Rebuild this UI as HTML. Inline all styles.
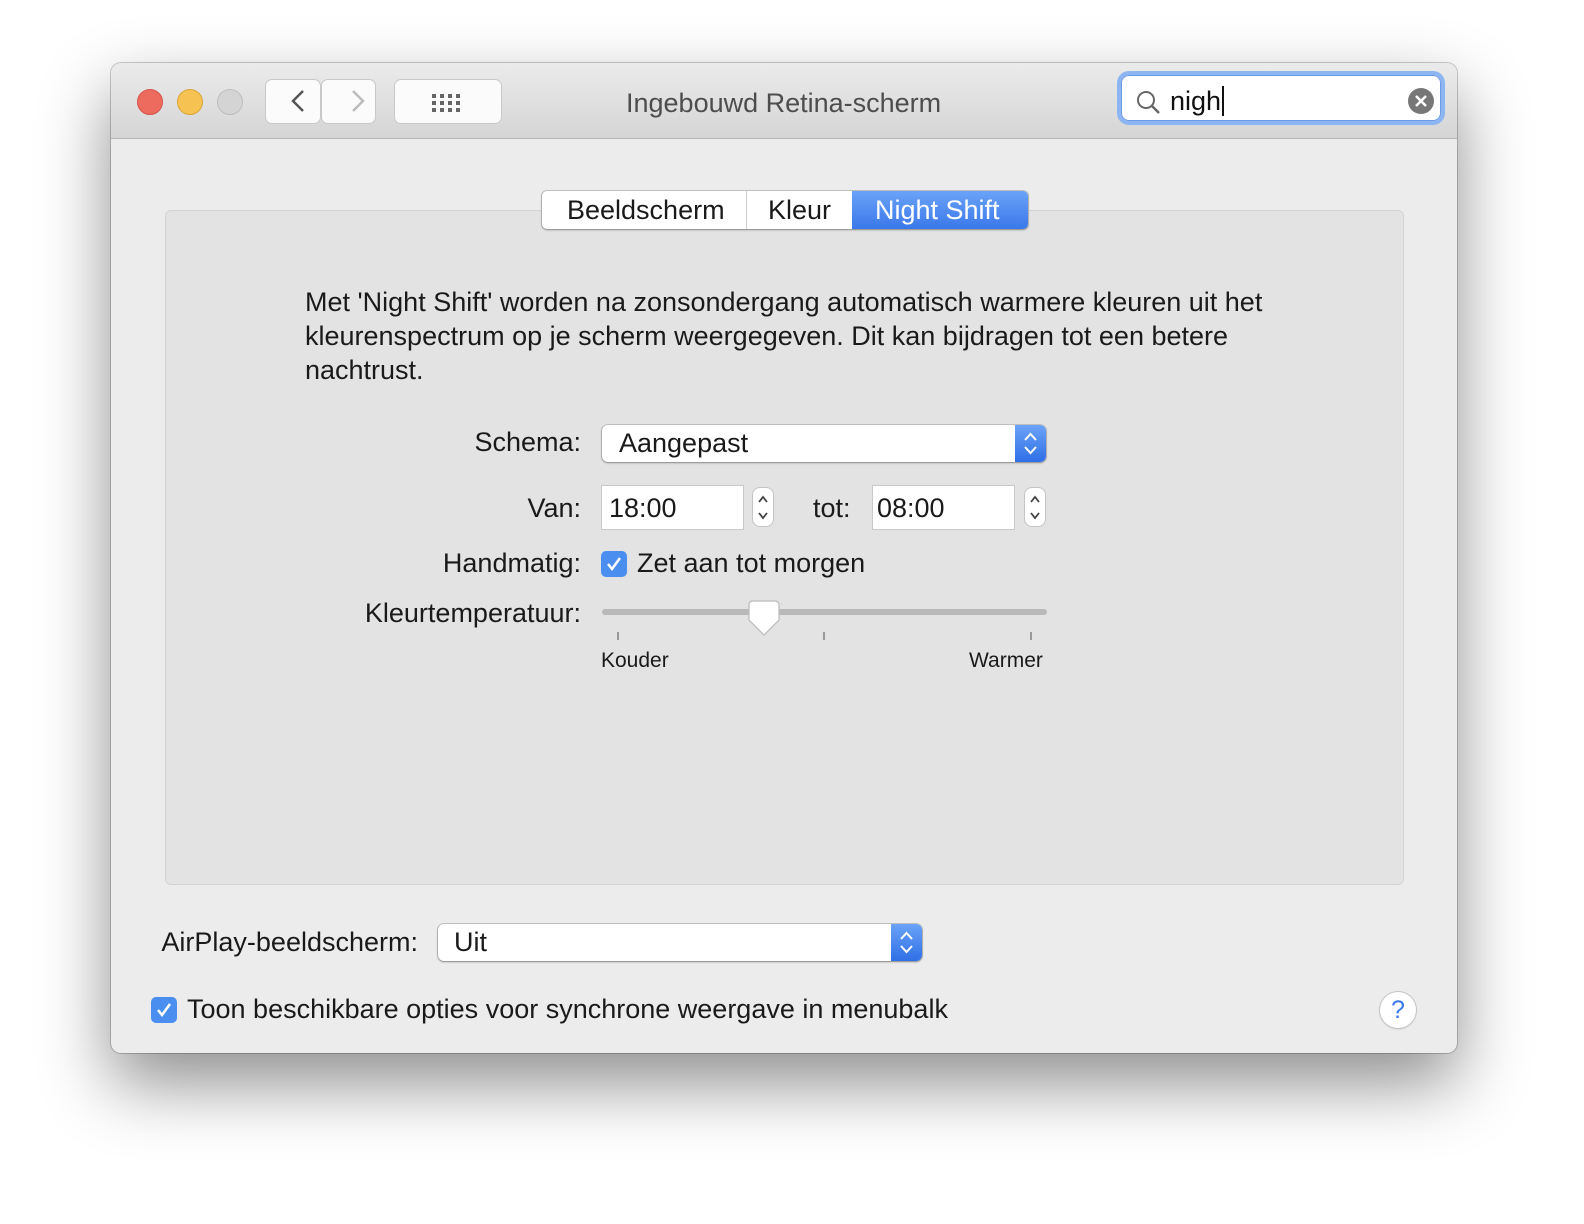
<!DOCTYPE html>
<html><head><style>
body{margin:0;width:1584px;height:1224px;background:#fff;font-family:"Liberation Sans",sans-serif;position:relative;overflow:hidden;color:#1a1a1a}
.a{position:absolute}
.win{left:111px;top:63px;width:1346px;height:990px;background:#ececec;border-radius:10px;box-shadow:0 30px 70px rgba(0,0,0,.45),0 0 0 1px rgba(0,0,0,.2);overflow:hidden}
.tb{left:0;top:0;width:1346px;height:75px;background:linear-gradient(#ebebeb,#d5d5d5);border-bottom:1px solid #b8b8b8}
.dot{width:24px;height:24px;border-radius:50%;top:26px}
.btn{background:#fbfbfb;border:1px solid #c8c8c8;border-radius:7px;height:43px;top:16px}
.t{font-size:27px;white-space:nowrap}
.r{text-align:right}
.field{background:#fff;box-shadow:0 0 0 1px #c9c9c9 inset}
.pop{background:#fff;border-radius:6px;box-shadow:0 1px 2px rgba(0,0,0,.3),0 0 0 1px #c4c4c4}
.arr{background:linear-gradient(#6aa3f8,#2f6fe6);border-radius:0 6px 6px 0}
.chk{width:26px;height:26px;border-radius:5px;background:#4a8ef0}
</style></head><body>
<div class="a win">
 <div class="a tb">
  <div class="a dot" style="left:26px;background:#ed6a5e;border:1px solid #d5544a"></div>
  <div class="a dot" style="left:66px;background:#f6c251;border:1px solid #d9a53a"></div>
  <div class="a dot" style="left:106px;background:#d4d4d4;border:1px solid #bdbdbd"></div>
  <div class="a btn" style="left:154px;width:54px"></div>
  <div class="a btn" style="left:210px;width:53px"></div>
  <svg class="a" style="left:154px;top:16px" width="110" height="45"><path d="M38 12 L28 22 L38 32" stroke="#555" stroke-width="2.5" fill="none"/><path d="M88 12 L98 22 L88 32" stroke="#bbb" stroke-width="2.5" fill="none"/></svg>
  <div class="a btn" style="left:283px;width:106px"></div>
  <svg class="a" style="left:320px;top:30px" width="32" height="20" fill="#666"><g><rect x="1" y="1" width="4" height="4"/><rect x="9" y="1" width="4" height="4"/><rect x="17" y="1" width="4" height="4"/><rect x="25" y="1" width="4" height="4"/><rect x="1" y="8" width="4" height="4"/><rect x="9" y="8" width="4" height="4"/><rect x="17" y="8" width="4" height="4"/><rect x="25" y="8" width="4" height="4"/><rect x="1" y="15" width="4" height="4"/><rect x="9" y="15" width="4" height="4"/><rect x="17" y="15" width="4" height="4"/><rect x="25" y="15" width="4" height="4"/></g></svg>
  <div class="a t" style="left:515px;top:25px;color:#4d4d4d">Ingebouwd Retina-scherm</div>
  <div class="a" style="left:1010px;top:12px;width:320px;height:46px;border-radius:8px;background:#fff;box-shadow:0 0 0 4px #8cb5f2,0 0 0 1px #6a9ae8 inset"></div>
  <svg class="a" style="left:1024px;top:26px" width="28" height="28"><circle cx="11" cy="11" r="8" stroke="#666" stroke-width="2" fill="none"/><path d="M17 17 L24 24" stroke="#666" stroke-width="2.5"/></svg>
  <div class="a t" style="left:1059px;top:23px;color:#111">nigh<span style="border-left:2px solid #111;margin-left:1px"></span></div>
  <svg class="a" style="left:1297px;top:25px" width="26" height="26"><circle cx="13" cy="13" r="13" fill="#777"/><path d="M8 8L18 18M18 8L8 18" stroke="#fff" stroke-width="2.5"/></svg>
 </div>
 <div class="a" style="left:54px;top:147px;width:1237px;height:673px;background:#e3e3e3;border:1px solid #d3d3d3;border-radius:6px"></div>
 <div class="a" style="left:431px;top:128px;width:486px;height:38px;background:#fff;border-radius:5px;box-shadow:0 1px 2px rgba(0,0,0,.3),0 0 0 1px #c4c4c4;overflow:hidden">
  <div class="a t" style="left:25px;top:4px">Beeldscherm</div>
  <div class="a" style="left:204px;top:0;width:1px;height:38px;background:#ccc"></div>
  <div class="a t" style="left:226px;top:4px">Kleur</div>
  <div class="a" style="left:310px;top:0;width:176px;height:38px;background:linear-gradient(#6aa3f8,#3a78ea)"></div>
  <div class="a t" style="left:333px;top:4px;color:#fff">Night Shift</div>
 </div>
 <div class="a t" style="left:194px;top:222px;line-height:34px;white-space:normal;width:990px">Met 'Night Shift' worden na zonsondergang automatisch warmere kleuren uit het kleurenspectrum op je scherm weergegeven. Dit kan bijdragen tot een betere nachtrust.</div>
 <div class="a t r" style="right:876px;top:364px">Schema:</div>
 <div class="a pop" style="left:491px;top:362px;width:444px;height:37px"></div>
 <div class="a arr" style="left:904px;top:362px;width:31px;height:37px"></div>
 <svg class="a" style="left:904px;top:362px" width="31" height="37"><path d="M10 15L15.5 9L21 15M10 22L15.5 28L21 22" stroke="#fff" stroke-width="2" fill="none"/></svg>
 <div class="a t" style="left:508px;top:365px">Aangepast</div>
 <div class="a t r" style="right:876px;top:430px">Van:</div>
 <div class="a field" style="left:490px;top:422px;width:143px;height:45px"></div>
 <div class="a t" style="left:498px;top:430px">18:00</div>
 <div class="a" style="left:642px;top:425px;width:20px;height:38px;background:#fff;border-radius:7px;box-shadow:0 0 0 1px #c4c4c4"></div>
 <svg class="a" style="left:642px;top:425px" width="20" height="38"><path d="M6 14L10 9L14 14M6 25L10 30L14 25" stroke="#444" stroke-width="1.8" fill="none"/></svg>
 <div class="a t" style="left:702px;top:430px">tot:</div>
 <div class="a field" style="left:761px;top:422px;width:143px;height:45px"></div>
 <div class="a t" style="left:766px;top:430px">08:00</div>
 <div class="a" style="left:914px;top:425px;width:20px;height:38px;background:#fff;border-radius:7px;box-shadow:0 0 0 1px #c4c4c4"></div>
 <svg class="a" style="left:914px;top:425px" width="20" height="38"><path d="M6 14L10 9L14 14M6 25L10 30L14 25" stroke="#444" stroke-width="1.8" fill="none"/></svg>
 <div class="a t r" style="right:876px;top:485px">Handmatig:</div>
 <div class="a chk" style="left:490px;top:488px"></div>
 <svg class="a" style="left:490px;top:488px" width="26" height="26"><path d="M7 13L11 18L19 7" stroke="#fff" stroke-width="2.5" fill="none"/></svg>
 <div class="a t" style="left:526px;top:485px">Zet aan tot morgen</div>
 <div class="a t r" style="right:876px;top:535px">Kleurtemperatuur:</div>
 <div class="a" style="left:491px;top:546px;width:445px;height:6px;border-radius:3px;background:#b9b9b9"></div>
 <svg class="a" style="left:636px;top:537px" width="34" height="38"><path d="M2 5Q2 1 6 1H28Q32 1 32 5V20L17 35L2 20Z" fill="#fff" stroke="#bbb" stroke-width="1.2"/></svg>
 <div class="a" style="left:506px;top:569px;width:2px;height:8px;background:#999"></div>
 <div class="a" style="left:712px;top:569px;width:2px;height:8px;background:#999"></div>
 <div class="a" style="left:919px;top:569px;width:2px;height:8px;background:#999"></div>
 <div class="a" style="left:490px;top:586px;font-size:21px">Kouder</div>
 <div class="a" style="left:858px;top:586px;font-size:21px">Warmer</div>
 <div class="a t r" style="right:1039px;top:864px">AirPlay-beeldscherm:</div>
 <div class="a pop" style="left:327px;top:861px;width:484px;height:37px"></div>
 <div class="a arr" style="left:780px;top:861px;width:31px;height:37px"></div>
 <svg class="a" style="left:780px;top:861px" width="31" height="37"><path d="M10 15L15.5 9L21 15M10 22L15.5 28L21 22" stroke="#fff" stroke-width="2" fill="none"/></svg>
 <div class="a t" style="left:343px;top:864px">Uit</div>
 <div class="a chk" style="left:40px;top:934px"></div>
 <svg class="a" style="left:40px;top:934px" width="26" height="26"><path d="M7 13L11 18L19 7" stroke="#fff" stroke-width="2.5" fill="none"/></svg>
 <div class="a t" style="left:76px;top:931px">Toon beschikbare opties voor synchrone weergave in menubalk</div>
 <div class="a" style="left:1269px;top:929px;width:36px;height:36px;border-radius:50%;background:#fff;box-shadow:0 0 0 1px #c4c4c4,0 1px 2px rgba(0,0,0,.2);color:#3b7ae8;font-size:25px;text-align:center;line-height:36px">?</div>
</div>
</body></html>
